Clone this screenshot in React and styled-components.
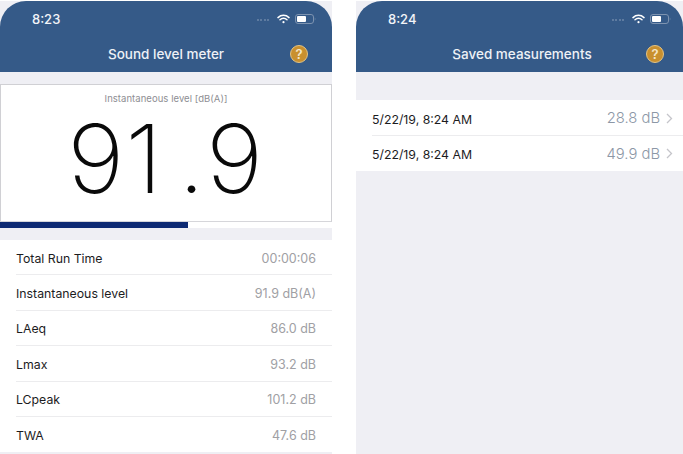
import React from 'react'
import styled, { createGlobalStyle } from 'styled-components'

const GlobalStyle = createGlobalStyle`
  html, body {
    margin: 0;
    padding: 0;
    background: #fff;
    overflow: hidden;
  }
  body {
    font-family: Inter, "Liberation Sans", sans-serif;
  }
`

const Page = styled.div`
  display: flex;
  width: 683px;
  height: 454px;
  padding-top: 1px;
  box-sizing: border-box;
  gap: 24px;
  overflow: hidden;
`

const Phone = styled.section`
  display: flex;
  flex-direction: column;
  flex: none;
  width: ${p => p.$width}px;
  height: 453px;
  background: #efeff4;
`

const Header = styled.header`
  flex: none;
  height: 71px;
  background: #355a88;
  border-radius: 26px 26px 0 0;
  color: #fff;
  box-sizing: border-box;
`

const StatusBar = styled.div`
  display: flex;
  align-items: center;
  justify-content: space-between;
  height: 36px;
  padding: 0 ${p => p.$right}px 0 32px;
`

const Clock = styled.span`
  font-size: 13px;
  font-weight: 500;
  color: #f2f4f8;
`

const StatusIcons = styled.div`
  display: flex;
  align-items: center;
  gap: 5px;
`

const Dots = styled.div`
  display: flex;
  gap: 1.5px;
  margin-right: 3px;
  margin-top: 2px;
`

const Dot = styled.i`
  width: 2px;
  height: 2px;
  border-radius: 50%;
  background: #6d87a8;
`

const NavBar = styled.div`
  position: relative;
  display: flex;
  align-items: center;
  justify-content: center;
  height: 33px;
  padding-left: ${p => p.$shift}px;
  font-size: 13.5px;
  font-weight: 500;
  color: #eef1f6;
`

const HelpButton = styled.span`
  position: absolute;
  right: ${p => p.$right}px;
  top: 8px;
  width: 18px;
  height: 18px;
  border-radius: 50%;
  background: #c9902f;
  border: 1px solid #e3c384;
  box-sizing: border-box;
  display: flex;
  align-items: center;
  justify-content: center;
  font-size: 13px;
  font-weight: 600;
  color: #f4e6c8;
`

const MeterCard = styled.div`
  margin-top: 12px;
  height: 138px;
  box-sizing: border-box;
  background: #fff;
  border: 1px solid #d0d0d4;
  border-bottom-color: #d6d6da;
  text-align: center;
`

const MeterCaption = styled.div`
  margin-top: 8px;
  font-size: 9.5px;
  line-height: 12px;
  letter-spacing: 0.05px;
  color: #8e8e93;
`

const MeterValue = styled.div`
  display: inline-block;
  font-size: 95px;
  font-weight: 200;
  line-height: 80px;
  margin-top: 14px;
  letter-spacing: 1px;
  color: #0a0a0a;
  transform: scaleX(1.03);
`

const MeterPoint = styled.span`
  display: inline-block;
  margin-left: 14px;
`

const BarTrack = styled.div`
  height: 6px;
  background: #fff;
`

const BarFill = styled.div`
  height: 100%;
  background: #0d2a73;
`

const List = styled.div`
  margin-top: ${p => p.$top}px;
  background: #fff;
`

const Row = styled.div`
  display: flex;
  align-items: center;
  justify-content: space-between;
  height: ${p => p.$height}px;
  box-sizing: border-box;
  padding: 1px ${p => p.$right}px 0 16px;
  font-size: 12.3px;
  color: #1c1c1e;
  position: relative;

  &:not(:last-child)::after {
    content: '';
    position: absolute;
    left: 16px;
    right: 0;
    bottom: 0;
    height: 1px;
    background: #ececee;
  }
`

const RowValue = styled.span`
  color: #a0a0a4;
  font-size: 12.5px;
`

const SavedLabel = styled.span`
  padding-top: 2px;
`

const SavedValue = styled.span`
  display: flex;
  align-items: center;
  gap: 6px;
  color: #8c97a6;
  font-size: 14.8px;
  font-weight: 300;
`

const Wifi = () => (
  <svg width="13" height="10" viewBox="0 0 13 10" fill="none" stroke="#fff" strokeLinecap="round">
    <path d="M1 3.6C4.2.6 8.8.6 12 3.6" strokeWidth="1.5" />
    <path d="M3 5.7c2-1.8 5-1.8 7 0" strokeWidth="1.5" />
    <circle cx="6.5" cy="8.2" r="1.1" fill="#fff" stroke="none" />
  </svg>
)

const Battery = () => (
  <svg width="21" height="10" viewBox="0 0 21 10" fill="none">
    <rect x=".5" y=".5" width="18" height="9" rx="2.5" stroke="#7d93b0" />
    <rect x="2" y="2" width="9" height="6" rx="1" fill="#fff" />
    <path d="M19.8 3.5c.7.3.7 2.7 0 3z" fill="#7d93b0" />
  </svg>
)

const Chevron = () => (
  <svg width="7" height="11" viewBox="0 0 7 11" fill="none" stroke="#c5c5ca" strokeWidth="1.3">
    <path d="M1 1l4.5 4.5L1 10" />
  </svg>
)

const TopBar = ({ time, title, statusRight, helpRight, shift = 0 }) => (
  <Header>
    <StatusBar $right={statusRight}>
      <Clock>{time}</Clock>
      <StatusIcons>
        <Dots>{[0, 1, 2, 3].map(i => <Dot key={i} />)}</Dots>
        <Wifi />
        <Battery />
      </StatusIcons>
    </StatusBar>
    <NavBar $shift={shift}>
      {title}
      <HelpButton $right={helpRight}>?</HelpButton>
    </NavBar>
  </Header>
)

const stats = [
  ['Total Run Time', '00:00:06'],
  ['Instantaneous level', '91.9 dB(A)'],
  ['LAeq', '86.0 dB'],
  ['Lmax', '93.2 dB'],
  ['LCpeak', '101.2 dB'],
  ['TWA', '47.6 dB'],
]

const saved = [
  ['5/22/19, 8:24 AM', '28.8 dB'],
  ['5/22/19, 8:24 AM', '49.9 dB'],
]

export default function App() {
  return (
    <>
      <GlobalStyle />
      <Page>
        <Phone $width={332}>
          <TopBar time="8:23" title="Sound level meter" statusRight={16} helpRight={24} />
          <MeterCard>
            <MeterCaption>Instantaneous level [dB(A)]</MeterCaption>
            <MeterValue>91<MeterPoint>.</MeterPoint>9</MeterValue>
          </MeterCard>
          <BarTrack>
            <BarFill style={{ width: `${(188 / 332) * 100}%` }} />
          </BarTrack>
          <List $top={12}>
            {stats.map(([label, value]) => (
              <Row key={label} $height={35.4} $right={16}>
                <span>{label}</span>
                <RowValue>{value}</RowValue>
              </Row>
            ))}
          </List>
        </Phone>
        <Phone $width={327}>
          <TopBar time="8:24" title="Saved measurements" statusRight={12} helpRight={19} shift={5} />
          <List $top={28}>
            {saved.map(([label, value], i) => (
              <Row key={i} $height={35.5} $right={10}>
                <SavedLabel>{label}</SavedLabel>
                <SavedValue>{value}<Chevron /></SavedValue>
              </Row>
            ))}
          </List>
        </Phone>
      </Page>
    </>
  )
}
